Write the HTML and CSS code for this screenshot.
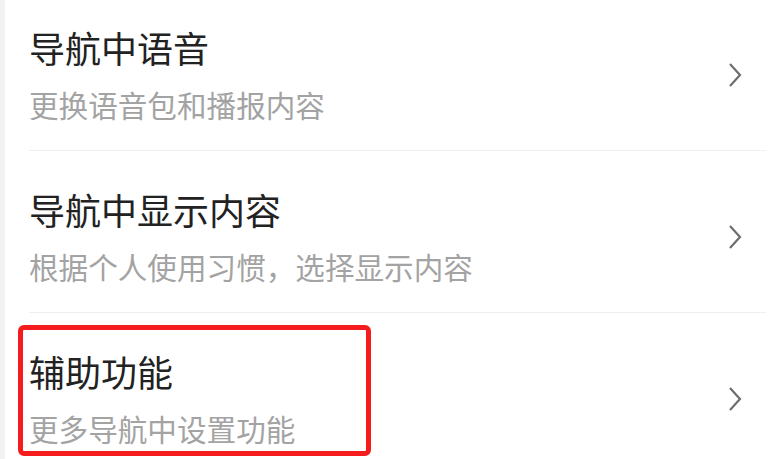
FILE: index.html
```html
<!DOCTYPE html>
<html lang="zh-CN">
<head>
  <meta charset="UTF-8" />
  <meta name="viewport" content="width=device-width, initial-scale=1.0"/>
  <title>导航设置</title>
  <link rel="stylesheet" href="styles.css">
</head>
<body>
  <div class="page">
    <div class="edge"></div>

    <!-- settings list (scrolled a little, so the top is cut) -->
    <ul class="settings">
      <li class="item">
        <div class="text">
          <div class="title">导航中语音</div>
          <div class="desc">更换语音包和播报内容</div>
        </div>
        <svg class="arrow" viewBox="0 0 14 26"><path d="M2 2 L12 13 L2 24" /></svg>
      </li>
      <li class="item">
        <div class="text">
          <div class="title">导航中显示内容</div>
          <div class="desc">根据个人使用习惯，选择显示内容</div>
        </div>
        <svg class="arrow" viewBox="0 0 14 26"><path d="M2 2 L12 13 L2 24" /></svg>
      </li>
      <li class="item marked">
        <div class="text">
          <div class="title">辅助功能</div>
          <div class="desc">更多导航中设置功能</div>
        </div>
        <svg class="arrow" viewBox="0 0 14 26"><path d="M2 2 L12 13 L2 24" /></svg>
        <!-- red highlight box drawn over the item -->
        <div class="highlight"></div>
      </li>
    </ul>
  </div>
</body>
</html>
```

FILE: styles.css
```css
body {
  margin: 0;
  background-color: #fff;
  font-family: "Noto Sans CJK SC", "Noto Sans", sans-serif;
  overflow: hidden;
}

.page {
  display: flex;
  height: 459px;
}

.edge {
  width: 5px;
  background-color: #f1f2f4;
}

.settings {
  flex: 1;
  list-style: none;
  margin: -11px 0 0 0;
  padding: 0;
}

.item {
  position: relative;
  display: flex;
  align-items: center;
  margin: 0 12px 0 24px;
  padding: 38px 0 28px 0;
  border-bottom: 1px solid #efefef;
}

.text {
  flex: 1;
}

.title {
  font-size: 36px;
  line-height: 40px;
  color: #222;
}

.desc {
  margin-top: 21px;
  font-size: 29.6px;
  line-height: 34px;
  color: #a3a3a3;
}

.arrow {
  width: 14px;
  height: 26px;
  margin-right: 24px;
}

.arrow path {
  fill: none;
  stroke: #6e6e6e;
  stroke-width: 2.2;
}

.highlight {
  position: absolute;
  left: -11px;
  top: 12px;
  width: 343px;
  height: 121px;
  border: 5px solid #f41c1c;
  border-radius: 6px;
}
```
